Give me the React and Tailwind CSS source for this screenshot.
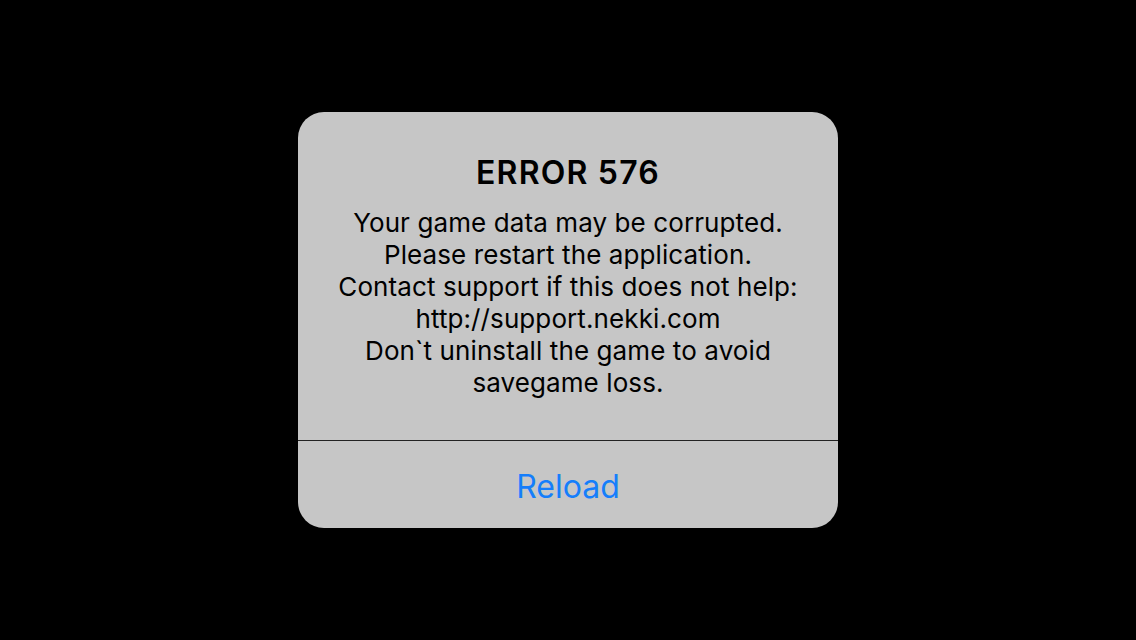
export default function App() {
    const lines = [
        'Your game data may be corrupted.',
        'Please restart the application.',
        'Contact support if this does not help:',
        'http://support.nekki.com',
        'Don`t uninstall the game to avoid',
        'savegame loss.',
    ];

    return (
        <div className="w-[1136px] h-[640px] bg-black flex items-center justify-center" style={{ fontFamily: 'Inter, "Noto Sans", sans-serif' }}>
            <div className="w-[540px] bg-[#c6c6c6] rounded-[26px] overflow-hidden flex flex-col">
                <div className="pt-[43px] pb-[41px] px-4 text-center text-black">
                    <h1 className="text-[32px] leading-[36px] font-semibold tracking-[1.2px]">ERROR 576</h1>
                    <div className="mt-4 text-[26px] leading-[32px] tracking-[0.1px]">
                        {lines.map(l => (
                            <p key={l}>{l}</p>
                        ))}
                    </div>
                </div>
                <div className="h-px bg-[#222]" />
                <button className="h-[87px] text-[32px] text-[#157efb] flex items-center justify-center pt-1">
                    Reload
                </button>
            </div>
        </div>
    );
}
